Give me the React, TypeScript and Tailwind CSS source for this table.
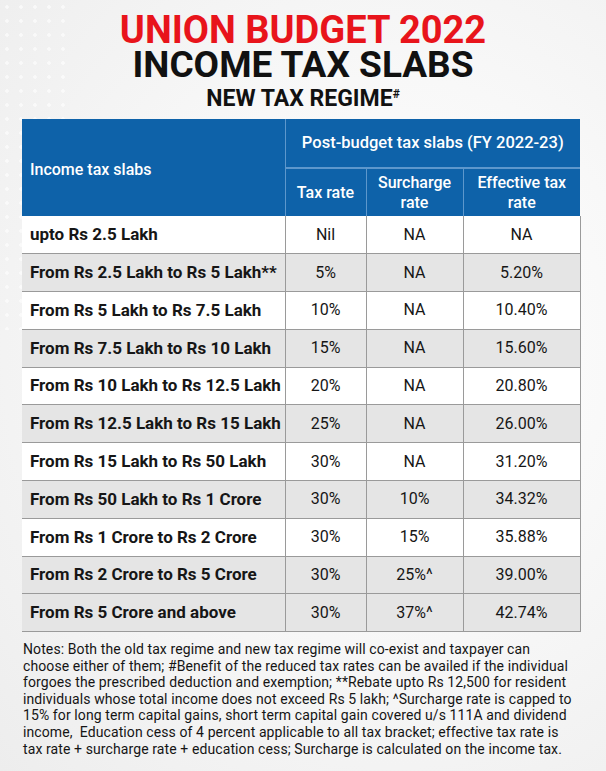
import React from "react";

const rows: [string, string, string, string][] = [
	["upto Rs 2.5 Lakh", "Nil", "NA", "NA"],
	["From Rs 2.5 Lakh to Rs 5 Lakh**", "5%", "NA", "5.20%"],
	["From Rs 5 Lakh to Rs 7.5 Lakh", "10%", "NA", "10.40%"],
	["From Rs 7.5 Lakh to Rs 10 Lakh", "15%", "NA", "15.60%"],
	["From Rs 10 Lakh to Rs 12.5 Lakh", "20%", "NA", "20.80%"],
	["From Rs 12.5 Lakh to Rs 15 Lakh", "25%", "NA", "26.00%"],
	["From Rs 15 Lakh to Rs 50 Lakh", "30%", "NA", "31.20%"],
	["From Rs 50 Lakh to Rs 1 Crore", "30%", "10%", "34.32%"],
	["From Rs 1 Crore to Rs 2 Crore", "30%", "15%", "35.88%"],
	["From Rs 2 Crore to Rs 5 Crore", "30%", "25%^", "39.00%"],
	["From Rs 5 Crore and above", "30%", "37%^", "42.74%"],
];

// which rows get the grey band
const shaded = [false, true, false, true, false, true, false, true, false, true, true];

const notes = [
	"Notes: Both the old tax regime and new tax regime will co-exist and taxpayer can",
	"choose either of them; #Benefit of the reduced tax rates can be availed if the individual",
	"forgoes the prescribed deduction and exemption; **Rebate upto Rs 12,500 for resident",
	"individuals whose total income does not exceed Rs 5 lakh; ^Surcharge rate is capped to",
	"15% for long term capital gains, short term capital gain covered u/s 111A and dividend",
	"income,  Education cess of 4 percent applicable to all tax bracket; effective tax rate is",
	"tax rate + surcharge rate + education cess; Surcharge is calculated on the income tax.",
];

function Title() {
	return (
		<div className="flex flex-col items-center pt-[13px]">
			<div className="h-[35px] text-[38px] leading-[35px] font-bold text-[#e8141b]">
				UNION BUDGET 2022
			</div>
			<div className="h-[34px] text-[37px] leading-[34px] font-bold text-[#111111]">
				INCOME TAX SLABS
			</div>
			<div className="mt-[5px] h-[24px] text-[23px] leading-[24px] font-bold text-[#111111]">
				NEW TAX REGIME<sup className="text-[12px] -top-[0.7em]">#</sup>
			</div>
		</div>
	);
}

function TaxTable() {
	return (
		<table className="mt-[8px] w-[558px] table-fixed border-collapse">
			<colgroup>
				<col className="w-[263px]" />
				<col className="w-[81px]" />
				<col className="w-[97px]" />
				<col className="w-[117px]" />
			</colgroup>
			<thead className="bg-[#0e62a9] text-white text-[16px] font-medium">
				<tr className="h-[49px]">
					<th rowSpan={2} className="pl-2 pt-[4px] text-left font-medium">
						Income tax slabs
					</th>
					<th
						colSpan={3}
						className="border-l border-b-2 border-[#5d97cc] text-[16.5px] font-medium"
					>
						Post-budget tax slabs (FY 2022-23)
					</th>
				</tr>
				<tr className="h-[48px] leading-[20px]">
					<th className="border-l border-[#5d97cc] font-medium">Tax rate</th>
					<th className="border-l border-[#5d97cc] font-medium">
						Surcharge
						<br />
						rate
					</th>
					<th className="border-l border-[#5d97cc] font-medium">
						Effective tax
						<br />
						rate
					</th>
				</tr>
			</thead>
			<tbody className="text-[16px] text-[#161616]">
				{rows.map((r, i) => (
					<tr
						key={r[0]}
						className={
							"h-[37.8px] border-b-[1.5px] border-[#9a9a9a] " +
							(shaded[i] ? "bg-[#e5e5e5]" : "bg-white")
						}
					>
						<td className="pl-2 text-[17px] font-bold whitespace-nowrap">{r[0]}</td>
						<td className="border-l-[1.5px] border-[#9a9a9a] text-center">{r[1]}</td>
						<td className="border-l-[1.5px] border-[#9a9a9a] text-center">{r[2]}</td>
						<td className="border-x-[1.5px] border-[#9a9a9a] text-center">{r[3]}</td>
					</tr>
				))}
			</tbody>
		</table>
	);
}

export default function App() {
	return (
		<div className="relative w-[606px] h-[771px] overflow-hidden px-[22px] font-[Roboto,sans-serif] bg-[#f1f1f1] bg-[radial-gradient(ellipse_at_65%_45%,#ffffff_0%,#f8f8f8_45%,#ededed_100%)]">
			{/* dotted texture on the left side */}
			<div className="absolute left-0 top-0 h-[330px] w-[70px] opacity-60 bg-[radial-gradient(circle,#ffffff_1.5px,transparent_2px)] bg-[length:14px_14px]" />
			<div className="relative">
				<Title />
				<TaxTable />
				<div className="mt-[9px] pl-[1px] text-[14px] leading-[16.55px] tracking-[0.1px] text-[#151515] whitespace-pre">
					{notes.map((n) => (
						<div key={n}>{n}</div>
					))}
				</div>
			</div>
		</div>
	);
}
